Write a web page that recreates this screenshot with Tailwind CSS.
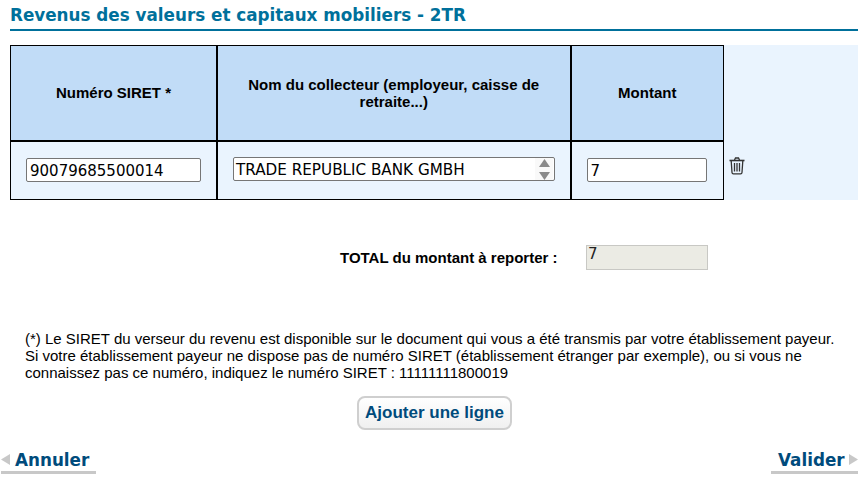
<!DOCTYPE html>
<html lang="fr">
<head>
<meta charset="utf-8">
<script src="https://cdn.jsdelivr.net/npm/@tailwindcss/browser@4"></script>
</head>
<body class="bg-white w-[866px] h-[492px] overflow-hidden font-['Liberation_Sans',Arial,sans-serif] text-black">
<div class="h-[492px] flex flex-col">
  <h1 class="mx-[10px] h-[31px] border-b-[2px] border-[#00709b] pt-[5px] font-['DejaVu_Sans',Verdana,sans-serif] font-bold text-[16.8px] leading-[20px] text-[#00709b] w-[848px] whitespace-nowrap">Revenus des valeurs et capitaux mobiliers - 2TR</h1>

  <div class="mx-[10px] mt-[14px] w-[848px] h-[155px] bg-[#eaf4fe] flex items-start">
    <table class="w-[713px] h-[154px] table-fixed border-collapse border border-black text-[15px] font-bold">
      <colgroup><col class="w-[206.5px]"><col class="w-[353.5px]"><col class="w-[153px]"></colgroup>
      <tbody>
        <tr class="h-[95px] bg-[#c1dcf7]">
          <td class="border-r-[2px] border-b-[2px] border-black text-center leading-[17px] align-middle">Numéro SIRET *</td>
          <td class="border-r-[2px] border-b-[2px] border-black text-center leading-[17px] align-middle px-[20px]">Nom du collecteur (employeur, caisse de retraite...)</td>
          <td class="border-b-[2px] border-black text-center leading-[17px] align-middle">Montant</td>
        </tr>
        <tr class="h-[59px] font-normal">
          <td class="border-r-[2px] border-black align-top pt-[16px] pl-[15px]">
            <input readonly value="90079685500014" class="block w-[175px] h-[24px] bg-white border border-[#767676] rounded-[2px] pl-[3px] pt-[2px] font-['DejaVu_Sans',Verdana,sans-serif] text-[15px] text-black">
          </td>
          <td class="border-r-[2px] border-black align-top pt-[15px] pl-[15px]">
            <div class="relative w-[322px] h-[24px] bg-white border border-[#767676] rounded-[2px] pl-[2px] pt-[1px] font-['DejaVu_Sans',Verdana,sans-serif] text-[15.2px] leading-[22px] whitespace-nowrap">TRADE REPUBLIC BANK GMBH
              <svg class="absolute right-[1px] top-0" width="18" height="22" viewBox="0 0 18 22"><rect width="18" height="22" fill="#f9f9f9"/><path d="M9.5 1 L15 9 H4 Z" fill="#8a8a8a"/><path d="M9.5 22 L15 14 H4 Z" fill="#8a8a8a"/></svg>
            </div>
          </td>
          <td class="align-top pt-[16px] pl-[15px]">
            <input readonly value="7" class="block w-[120px] h-[24px] bg-white border border-[#767676] rounded-[2px] pl-[3px] pt-[2px] font-['DejaVu_Sans',Verdana,sans-serif] text-[15px] text-black">
          </td>
        </tr>
      </tbody>
    </table>
    <svg class="ml-[5px] mt-[112px]" width="16" height="18" viewBox="0 0 16 18" fill="none" stroke="#333" stroke-width="1.3">
      <path d="M0.5 3.5 H15.5" stroke-width="1.6"/>
      <path d="M5.5 3 L6.5 1 H9.5 L10.5 3"/>
      <path d="M2.2 4 L3 15.5 Q3.1 16.8 4.4 16.8 H11.6 Q12.9 16.8 13 15.5 L13.8 4"/>
      <path d="M5.5 6 V14.5 M8 6 V14.5 M10.5 6 V14.5"/>
    </svg>
  </div>

  <div class="mt-[45px] h-[25px] flex items-center">
    <span class="ml-[340px] w-[246px] text-[15px] font-bold leading-[17px] whitespace-nowrap">TOTAL du montant à reporter :</span>
    <div class="w-[122px] h-[25px] bg-[#ebebe4] border border-[#c8c8c4] pl-[1px] font-['DejaVu_Sans',Verdana,sans-serif] text-[15px] leading-[17px] text-[#222]">7</div>
  </div>

  <p class="mt-[60px] ml-[25px] w-[835px] text-[15px] leading-[17px] whitespace-nowrap">(*) Le SIRET du verseur du revenu est disponible sur le document qui vous a été transmis par votre établissement payeur.<br>Si votre établissement payeur ne dispose pas de numéro SIRET (établissement étranger par exemple), ou si vous ne<br>connaissez pas ce numéro, indiquez le numéro SIRET : 11111111800019</p>

  <div class="mt-[15px] ml-[357px]">
    <button class="h-[34px] w-[155px] rounded-[8px] border-[2px] border-[#cfcfcf] bg-gradient-to-b from-white to-[#f0f0f0] text-[17px] font-bold text-[#004b7c] leading-[20px] whitespace-nowrap">Ajouter une ligne</button>
  </div>

  <div class="mt-[20px] flex justify-between">
    <a class="ml-[1px] w-[95px] h-[24px] border-b-[3px] border-[#c8c8c8] pb-[2px] flex items-center gap-[5px] font-['DejaVu_Sans',Verdana,sans-serif] font-bold text-[16.8px] leading-[20px] text-[#004b7c]">
      <svg width="9" height="11" viewBox="0 0 9 11"><path d="M9 0 V11 L0 5.5 Z" fill="#c8c8c8"/></svg>Annuler</a>
    <a class="mr-[8px] w-[87px] h-[24px] border-b-[3px] border-[#c8c8c8] pb-[2px] flex items-center gap-[4px] pl-[7px] font-['DejaVu_Sans',Verdana,sans-serif] font-bold text-[16.8px] leading-[20px] text-[#004b7c] whitespace-nowrap">Valider<svg width="9" height="11" viewBox="0 0 9 11"><path d="M0 0 V11 L9 5.5 Z" fill="#c8c8c8"/></svg></a>
  </div>
</div>
</body>
</html>
